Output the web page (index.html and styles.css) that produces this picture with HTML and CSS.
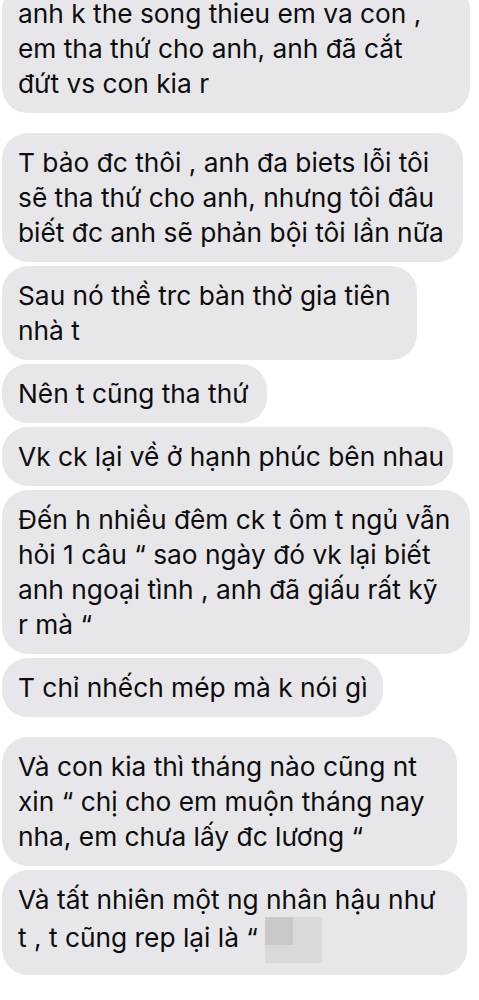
FILE: index.html
```html
<!DOCTYPE html>
<html lang="vi">
<head>
<meta charset="utf-8">
<title>Tin nhắn</title>
<link rel="stylesheet" href="styles.css">
</head>
<body>
<div class="chat">
  <div class="msg first w-468">anh k the song thieu em va con ,<br>em tha thứ cho anh, anh đã cắt<br>đứt vs con kia r</div>
  <div class="msg group w-461">T bảo đc thôi , anh đa biets lỗi tôi<br>sẽ tha thứ cho anh, nhưng tôi đâu<br>biết đc anh sẽ phản bội tôi lần nữa</div>
  <div class="msg w-415">Sau nó thề trc bàn thờ gia tiên<br>nhà t</div>
  <div class="msg w-265">Nên t cũng tha thứ</div>
  <div class="msg w-451">Vk ck lại về ở hạnh phúc bên nhau</div>
  <div class="msg w-468">Đến h nhiều đêm ck t ôm t ngủ vẫn<br>hỏi 1 câu “ sao ngày đó vk lại biết<br>anh ngoại tình , anh đã giấu rất kỹ<br>r mà “</div>
  <div class="msg w-381">T chỉ nhếch mép mà k nói gì</div>
  <div class="msg group w-455">Và con kia thì tháng nào cũng nt<br>xin “ chị cho em muộn tháng nay<br>nha, em chưa lấy đc lương “</div>
  <div class="msg w-465">Và tất nhiên một ng nhân hậu như<br>t , t cũng rep lại là “ <span class="blur"></span></div>
</div>
</body>
</html>
```

FILE: styles.css
```css
html, body {
  margin: 0;
  padding: 0;
  background: #ffffff;
}

body {
  width: 479px;
  height: 1000px;
  overflow: hidden;
}

.chat {
  display: flex;
  flex-direction: column;
  align-items: flex-start;
  gap: 4px;
  padding-left: 2px;
  margin-top: -16px;
}

.msg {
  box-sizing: border-box;
  background: #e7e7e9;
  border-radius: 26px;
  padding: 12px 14px 12px 16px;
  font-family: Inter, "Liberation Sans", sans-serif;
  font-size: 26.3px;
  line-height: 35px;
  color: #0d0d0d;
  white-space: nowrap;
}

.msg.group {
  margin-top: 16px;
}

.w-468 { width: 468px; }
.w-465 { width: 465px; }
.w-461 { width: 461px; }
.w-455 { width: 455px; }
.w-451 { width: 451px; }
.w-415 { width: 415px; }
.w-381 { width: 381px; }
.w-265 { width: 265px; }

.blur {
  display: inline-block;
  width: 57px;
  height: 46px;
  vertical-align: -16px;
  background:
    linear-gradient(#c9c9c9, #c9c9c9) 0 0 / 28px 28px no-repeat,
    #d9d9d9;
}
```
